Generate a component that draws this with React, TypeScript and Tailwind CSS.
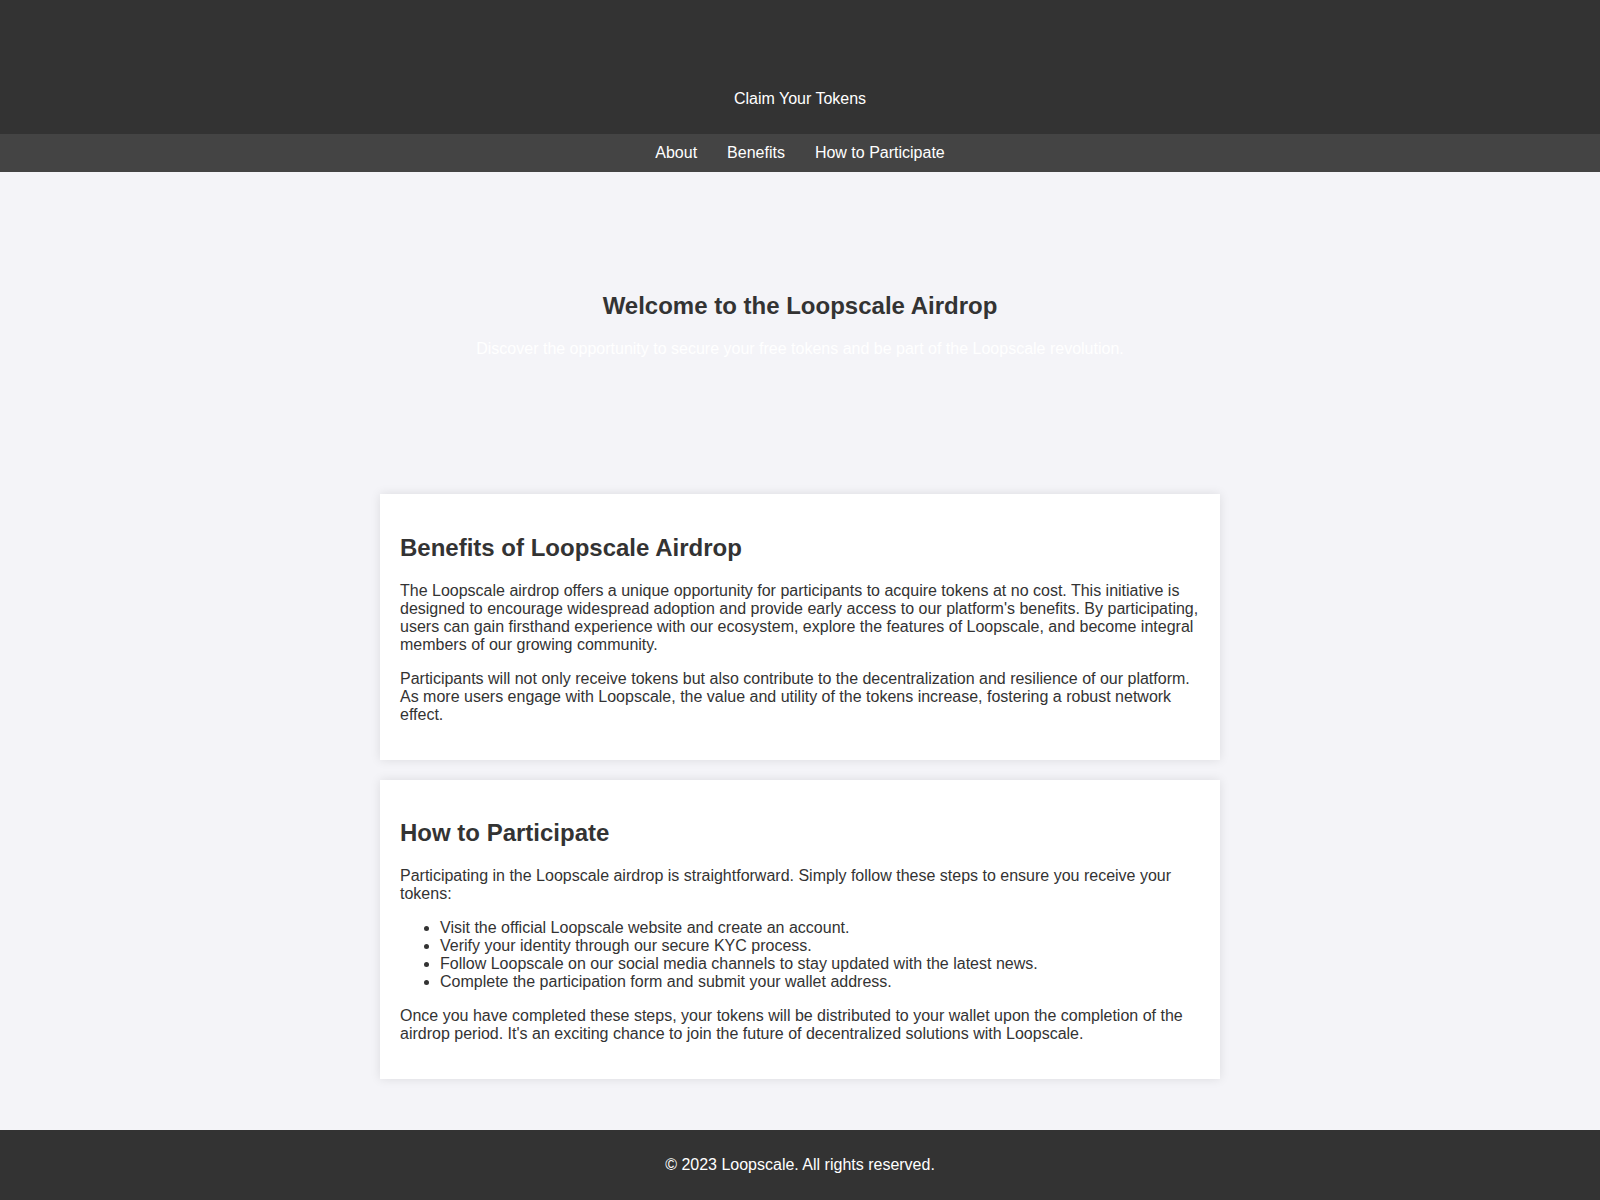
export default function App() {
  const steps = [
    "Visit the official Loopscale website and create an account.",
    "Verify your identity through our secure KYC process.",
    "Follow Loopscale on our social media channels to stay updated with the latest news.",
    "Complete the participation form and submit your wallet address.",
  ];

  return (
    <div className="min-h-screen flex flex-col bg-[#f4f4f8] text-[#333] text-base leading-[normal] font-['Liberation_Sans',Arial,sans-serif]">
      <header className="bg-[#333] text-white text-center pt-[90px] pb-[26px]">
        <p>Claim Your Tokens</p>
      </header>

      <nav className="bg-[#444] py-[10px] flex justify-center">
        {["About", "Benefits", "How to Participate"].map((l) => (
          <a key={l} href="#" className="text-white mx-[15px]">
            {l}
          </a>
        ))}
      </nav>

      <main className="flex-1 pb-8">
        <section className="text-center py-[100px] px-5">
          <h2 className="text-2xl font-bold leading-[normal] my-5">Welcome to the Loopscale Airdrop</h2>
          <p className="text-white mb-4">
            Discover the opportunity to secure your free tokens and be part of the Loopscale revolution.
          </p>
        </section>

        <section className="bg-white w-[840px] mx-auto mt-5 p-5 shadow-[0_0_10px_rgba(0,0,0,0.1)]">
          <h2 className="text-2xl font-bold leading-[normal] my-5">Benefits of Loopscale Airdrop</h2>
          <p className="mb-4">
            The Loopscale airdrop offers a unique opportunity for participants to acquire tokens at no cost. This
            initiative is designed to encourage widespread adoption and provide early access to our platform's
            benefits. By participating, users can gain firsthand experience with our ecosystem, explore the features of
            Loopscale, and become integral members of our growing community.
          </p>
          <p className="mb-4">
            Participants will not only receive tokens but also contribute to the decentralization and resilience of our
            platform. As more users engage with Loopscale, the value and utility of the tokens increase, fostering a
            robust network effect.
          </p>
        </section>

        <section className="bg-white w-[840px] mx-auto mt-5 p-5 shadow-[0_0_10px_rgba(0,0,0,0.1)]">
          <h2 className="text-2xl font-bold leading-[normal] mt-[19px] mb-5">How to Participate</h2>
          <p className="mb-4">
            Participating in the Loopscale airdrop is straightforward. Simply follow these steps to ensure you receive
            your tokens:
          </p>
          <ul className="list-disc pl-10 mb-4">
            {steps.map((s) => (
              <li key={s}>{s}</li>
            ))}
          </ul>
          <p className="mb-4">
            Once you have completed these steps, your tokens will be distributed to your wallet upon the completion of
            the airdrop period. It's an exciting chance to join the future of decentralized solutions with Loopscale.
          </p>
        </section>
      </main>

      <footer className="bg-[#333] text-white text-center h-[70px] flex items-center justify-center">
        <p>© 2023 Loopscale. All rights reserved.</p>
      </footer>
    </div>
  );
}
